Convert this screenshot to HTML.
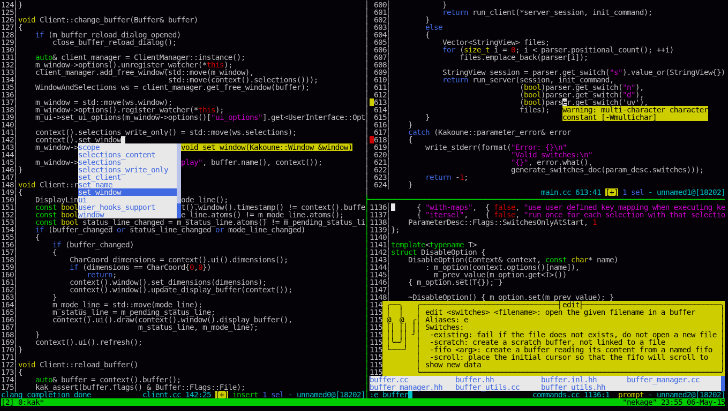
<!DOCTYPE html>
<html><head><meta charset="utf-8"><title>kak</title>
<style>
html,body{margin:0;padding:0;background:#040206;overflow:hidden}
body{width:728px;height:411px;position:relative}
#t{will-change:transform;position:absolute;left:0.63px;top:0.56px;width:1352px;height:756px;transform-origin:0 0;transform:scale(0.5357,0.5355);font-family:"DejaVu Sans Mono","Liberation Mono",monospace;font-size:14.4000px;letter-spacing:-0.6695px;line-height:14px;color:#bebebe}
#t i{position:absolute;height:14px;display:block}
#t b{position:absolute;margin-top:0.4px;font-weight:normal;white-space:pre;height:14px;display:block}
#t b.x{width:8px;margin-left:-1.5px;letter-spacing:0}
#t b.h{text-shadow:0 -0.7px 0 currentColor}
.c0{color:#bebebe}
.c1{color:#a8a8a8}
.c2{color:#4169e1}
.c3{color:#cdcd00}
.c4{color:#cd0000}
.c5{color:#00cd00}
.c6{color:#cd00cd}
.c7{color:#000000}
.c8{color:#bebebe;text-decoration:underline;text-underline-offset:1px}
.c9{color:#e8e8e8}
.c10{color:#00c0c8}
</style></head><body><div id="t">
<i style="left:688px;top:182px;width:8px;height:14px;background:#cdcd00"></i>
<i style="left:1048px;top:182px;width:8px;height:14px;background:#e8e8e8"></i>
<i style="left:1048px;top:196px;width:272px;height:28px;background:#cdcd00"></i>
<i style="left:224px;top:252px;width:8px;height:14px;background:#e8e8e8"></i>
<i style="left:688px;top:252px;width:8px;height:14px;background:#cd0000"></i>
<i style="left:144px;top:266px;width:184px;height:84px;background:#e8e8e8"></i>
<i style="left:328px;top:266px;width:8px;height:112px;background:#bac4ea"></i>
<i style="left:336px;top:266px;width:320px;height:14px;background:#cdcd00"></i>
<i style="left:144px;top:350px;width:184px;height:14px;background:#4169e1"></i>
<i style="left:1128px;top:350px;width:24px;height:14px;background:#cdcd00"></i>
<i style="left:144px;top:364px;width:184px;height:42px;background:#e8e8e8"></i>
<i style="left:328px;top:378px;width:8px;height:28px;background:#4169e1"></i>
<i style="left:728px;top:378px;width:8px;height:14px;background:#e8e8e8"></i>
<i style="left:712px;top:560px;width:640px;height:140px;background:#cdcd00"></i>
<i style="left:688px;top:700px;width:656px;height:28px;background:#e8e8e8"></i>
<i style="left:1344px;top:700px;width:8px;height:28px;background:#4169e1"></i>
<i style="left:400px;top:728px;width:24px;height:14px;background:#cdcd00"></i>
<i style="left:760px;top:728px;width:8px;height:14px;background:#00c0c8"></i>
<i style="left:0px;top:742px;width:1352px;height:14px;background:#00cd00"></i>
<b class="c0" style="left:0px;top:0px">124</b>
<b class="c0 x" style="left:24px;top:0px">│</b>
<b class="c0" style="left:32px;top:0px">}</b>
<b class="c1 x" style="left:680px;top:0px">│</b>
<b class="c0" style="left:696px;top:0px">600</b>
<b class="c0 x" style="left:720px;top:0px">│</b>
<b class="c0" style="left:824px;top:0px">}</b>
<b class="c0" style="left:0px;top:14px">125</b>
<b class="c0 x" style="left:24px;top:14px">│</b>
<b class="c1 x" style="left:680px;top:14px">│</b>
<b class="c0" style="left:696px;top:14px">601</b>
<b class="c0 x" style="left:720px;top:14px">│</b>
<b class="c2" style="left:824px;top:14px">return</b>
<b class="c0" style="left:880px;top:14px">run_client(*server_session, init_command);</b>
<b class="c0" style="left:0px;top:28px">126</b>
<b class="c0 x" style="left:24px;top:28px">│</b>
<b class="c3" style="left:32px;top:28px">void</b>
<b class="c0" style="left:72px;top:28px">Client::change_buffer(Buffer&amp; buffer)</b>
<b class="c1 x" style="left:680px;top:28px">│</b>
<b class="c0" style="left:696px;top:28px">602</b>
<b class="c0 x" style="left:720px;top:28px">│</b>
<b class="c0" style="left:792px;top:28px">}</b>
<b class="c0" style="left:0px;top:42px">127</b>
<b class="c0 x" style="left:24px;top:42px">│</b>
<b class="c0" style="left:32px;top:42px">{</b>
<b class="c1 x" style="left:680px;top:42px">│</b>
<b class="c0" style="left:696px;top:42px">603</b>
<b class="c0 x" style="left:720px;top:42px">│</b>
<b class="c2" style="left:792px;top:42px">else</b>
<b class="c0" style="left:0px;top:56px">128</b>
<b class="c0 x" style="left:24px;top:56px">│</b>
<b class="c2" style="left:64px;top:56px">if</b>
<b class="c0" style="left:88px;top:56px">(m_buffer_reload_dialog_opened)</b>
<b class="c1 x" style="left:680px;top:56px">│</b>
<b class="c0" style="left:696px;top:56px">604</b>
<b class="c0 x" style="left:720px;top:56px">│</b>
<b class="c0" style="left:792px;top:56px">{</b>
<b class="c0" style="left:0px;top:70px">129</b>
<b class="c0 x" style="left:24px;top:70px">│</b>
<b class="c0" style="left:96px;top:70px">close_buffer_reload_dialog();</b>
<b class="c1 x" style="left:680px;top:70px">│</b>
<b class="c0" style="left:696px;top:70px">605</b>
<b class="c0 x" style="left:720px;top:70px">│</b>
<b class="c0" style="left:824px;top:70px">Vector&lt;StringView&gt; files;</b>
<b class="c0" style="left:0px;top:84px">130</b>
<b class="c0 x" style="left:24px;top:84px">│</b>
<b class="c1 x" style="left:680px;top:84px">│</b>
<b class="c0" style="left:696px;top:84px">606</b>
<b class="c0 x" style="left:720px;top:84px">│</b>
<b class="c2" style="left:824px;top:84px">for</b>
<b class="c0" style="left:856px;top:84px">(</b>
<b class="c3" style="left:864px;top:84px">size_t</b>
<b class="c0" style="left:920px;top:84px">i =</b>
<b class="c4" style="left:952px;top:84px">0</b>
<b class="c0" style="left:960px;top:84px">; i &lt; parser.positional_count(); ++i)</b>
<b class="c0" style="left:0px;top:98px">131</b>
<b class="c0 x" style="left:24px;top:98px">│</b>
<b class="c5" style="left:64px;top:98px">auto</b>
<b class="c0" style="left:96px;top:98px">&amp; client_manager = ClientManager::instance();</b>
<b class="c1 x" style="left:680px;top:98px">│</b>
<b class="c0" style="left:696px;top:98px">607</b>
<b class="c0 x" style="left:720px;top:98px">│</b>
<b class="c0" style="left:856px;top:98px">files.emplace_back(parser[i]);</b>
<b class="c0" style="left:0px;top:112px">132</b>
<b class="c0 x" style="left:24px;top:112px">│</b>
<b class="c0" style="left:64px;top:112px">m_window-&gt;options().unregister_watcher(*</b>
<b class="c4" style="left:384px;top:112px">this</b>
<b class="c0" style="left:416px;top:112px">);</b>
<b class="c1 x" style="left:680px;top:112px">│</b>
<b class="c0" style="left:696px;top:112px">608</b>
<b class="c0 x" style="left:720px;top:112px">│</b>
<b class="c0" style="left:0px;top:126px">133</b>
<b class="c0 x" style="left:24px;top:126px">│</b>
<b class="c0" style="left:64px;top:126px">client_manager.add_free_window(std::move(m_window),</b>
<b class="c1 x" style="left:680px;top:126px">│</b>
<b class="c0" style="left:696px;top:126px">609</b>
<b class="c0 x" style="left:720px;top:126px">│</b>
<b class="c0" style="left:824px;top:126px">StringView session = parser.get_switch(</b>
<b class="c6" style="left:1136px;top:126px">&quot;s&quot;</b>
<b class="c0" style="left:1160px;top:126px">).value_or(StringView{})</b>
<b class="c0" style="left:0px;top:140px">134</b>
<b class="c0 x" style="left:24px;top:140px">│</b>
<b class="c0" style="left:312px;top:140px">std::move(context().selections()));</b>
<b class="c1 x" style="left:680px;top:140px">│</b>
<b class="c0" style="left:696px;top:140px">610</b>
<b class="c0 x" style="left:720px;top:140px">│</b>
<b class="c2" style="left:824px;top:140px">return</b>
<b class="c0" style="left:880px;top:140px">run_server(session, init_command,</b>
<b class="c0" style="left:0px;top:154px">135</b>
<b class="c0 x" style="left:24px;top:154px">│</b>
<b class="c0" style="left:64px;top:154px">WindowAndSelections ws = client_manager.get_free_window(buffer);</b>
<b class="c1 x" style="left:680px;top:154px">│</b>
<b class="c0" style="left:696px;top:154px">611</b>
<b class="c0 x" style="left:720px;top:154px">│</b>
<b class="c0" style="left:968px;top:154px">(</b>
<b class="c3" style="left:976px;top:154px">bool</b>
<b class="c0" style="left:1008px;top:154px">)parser.get_switch(</b>
<b class="c6" style="left:1160px;top:154px">&quot;n&quot;</b>
<b class="c0" style="left:1184px;top:154px">),</b>
<b class="c0" style="left:0px;top:168px">136</b>
<b class="c0 x" style="left:24px;top:168px">│</b>
<b class="c1 x" style="left:680px;top:168px">│</b>
<b class="c0" style="left:696px;top:168px">612</b>
<b class="c0 x" style="left:720px;top:168px">│</b>
<b class="c0" style="left:968px;top:168px">(</b>
<b class="c3" style="left:976px;top:168px">bool</b>
<b class="c0" style="left:1008px;top:168px">)parser.get_switch(</b>
<b class="c6" style="left:1160px;top:168px">&quot;d&quot;</b>
<b class="c0" style="left:1184px;top:168px">),</b>
<b class="c0" style="left:0px;top:182px">137</b>
<b class="c0 x" style="left:24px;top:182px">│</b>
<b class="c0" style="left:64px;top:182px">m_window = std::move(ws.window);</b>
<b class="c1 x" style="left:680px;top:182px">│</b>
<b class="c0" style="left:696px;top:182px">613</b>
<b class="c0 x" style="left:720px;top:182px">│</b>
<b class="c0" style="left:968px;top:182px">(</b>
<b class="c3" style="left:976px;top:182px">bool</b>
<b class="c0" style="left:1008px;top:182px">)pars</b>
<b class="c7" style="left:1048px;top:182px">e</b>
<b class="c0" style="left:1056px;top:182px">r.get_switch(&#x27;uv&#x27;),</b>
<b class="c0" style="left:0px;top:196px">138</b>
<b class="c0 x" style="left:24px;top:196px">│</b>
<b class="c0" style="left:64px;top:196px">m_window-&gt;options().register_watcher(*</b>
<b class="c4" style="left:368px;top:196px">this</b>
<b class="c0" style="left:400px;top:196px">);</b>
<b class="c1 x" style="left:680px;top:196px">│</b>
<b class="c0" style="left:696px;top:196px">614</b>
<b class="c0 x" style="left:720px;top:196px">│</b>
<b class="c0" style="left:968px;top:196px">files);</b>
<b class="c7" style="left:1048px;top:196px">warning: multi-character character</b>
<b class="c0" style="left:0px;top:210px">139</b>
<b class="c0 x" style="left:24px;top:210px">│</b>
<b class="c0" style="left:64px;top:210px">m_ui-&gt;set_ui_options(m_window-&gt;options()[</b>
<b class="c6" style="left:392px;top:210px">&quot;ui_options&quot;</b>
<b class="c0" style="left:488px;top:210px">].get&lt;UserInterface::Opt</b>
<b class="c1 x" style="left:680px;top:210px">│</b>
<b class="c0" style="left:696px;top:210px">615</b>
<b class="c0 x" style="left:720px;top:210px">│</b>
<b class="c0" style="left:792px;top:210px">}</b>
<b class="c7" style="left:1048px;top:210px">constant [-Wmultichar]</b>
<b class="c0" style="left:0px;top:224px">140</b>
<b class="c0 x" style="left:24px;top:224px">│</b>
<b class="c1 x" style="left:680px;top:224px">│</b>
<b class="c0" style="left:696px;top:224px">616</b>
<b class="c0 x" style="left:720px;top:224px">│</b>
<b class="c0" style="left:760px;top:224px">}</b>
<b class="c0" style="left:0px;top:238px">141</b>
<b class="c0 x" style="left:24px;top:238px">│</b>
<b class="c0" style="left:64px;top:238px">context().selections_write_only() = std::move(ws.selections);</b>
<b class="c1 x" style="left:680px;top:238px">│</b>
<b class="c0" style="left:696px;top:238px">617</b>
<b class="c0 x" style="left:720px;top:238px">│</b>
<b class="c2" style="left:760px;top:238px">catch</b>
<b class="c0" style="left:808px;top:238px">(Kakoune::parameter_error&amp; error</b>
<b class="c0" style="left:0px;top:252px">142</b>
<b class="c0 x" style="left:24px;top:252px">│</b>
<b class="c0" style="left:64px;top:252px">context().</b>
<b class="c8" style="left:144px;top:252px">set_window</b>
<b class="c1 x" style="left:680px;top:252px">│</b>
<b class="c0" style="left:696px;top:252px">618</b>
<b class="c0 x" style="left:720px;top:252px">│</b>
<b class="c0" style="left:760px;top:252px">{</b>
<b class="c0" style="left:0px;top:266px">143</b>
<b class="c0 x" style="left:24px;top:266px">│</b>
<b class="c0" style="left:64px;top:266px">m_window-&gt;</b>
<b class="c2" style="left:144px;top:266px">scope</b>
<b class="c7" style="left:336px;top:266px">void set_window(Kakoune::Window &amp;window)</b>
<b class="c1 x" style="left:680px;top:266px">│</b>
<b class="c0" style="left:696px;top:266px">619</b>
<b class="c0 x" style="left:720px;top:266px">│</b>
<b class="c0" style="left:792px;top:266px">write_stderr(format(</b>
<b class="c6" style="left:952px;top:266px">&quot;Error: {}\n&quot;</b>
<b class="c0" style="left:0px;top:280px">144</b>
<b class="c0 x" style="left:24px;top:280px">│</b>
<b class="c2" style="left:144px;top:280px">selections_content</b>
<b class="c1 x" style="left:680px;top:280px">│</b>
<b class="c0" style="left:696px;top:280px">620</b>
<b class="c0 x" style="left:720px;top:280px">│</b>
<b class="c6" style="left:952px;top:280px">&quot;Valid switches:\n&quot;</b>
<b class="c0" style="left:0px;top:294px">145</b>
<b class="c0 x" style="left:24px;top:294px">│</b>
<b class="c0" style="left:64px;top:294px">m_window-&gt;</b>
<b class="c2" style="left:144px;top:294px">selections</b>
<b class="c6" style="left:336px;top:294px">play&quot;</b>
<b class="c0" style="left:376px;top:294px">, buffer.name(), context());</b>
<b class="c1 x" style="left:680px;top:294px">│</b>
<b class="c0" style="left:696px;top:294px">621</b>
<b class="c0 x" style="left:720px;top:294px">│</b>
<b class="c6" style="left:952px;top:294px">&quot;{}&quot;</b>
<b class="c0" style="left:984px;top:294px">, error.what(),</b>
<b class="c0" style="left:0px;top:308px">146</b>
<b class="c0 x" style="left:24px;top:308px">│</b>
<b class="c0" style="left:32px;top:308px">}</b>
<b class="c2" style="left:144px;top:308px">selections_write_only</b>
<b class="c1 x" style="left:680px;top:308px">│</b>
<b class="c0" style="left:696px;top:308px">622</b>
<b class="c0 x" style="left:720px;top:308px">│</b>
<b class="c0" style="left:952px;top:308px">generate_switches_doc(param_desc.switches)));</b>
<b class="c0" style="left:0px;top:322px">147</b>
<b class="c0 x" style="left:24px;top:322px">│</b>
<b class="c2" style="left:144px;top:322px">set_client</b>
<b class="c1 x" style="left:680px;top:322px">│</b>
<b class="c0" style="left:696px;top:322px">623</b>
<b class="c0 x" style="left:720px;top:322px">│</b>
<b class="c2" style="left:792px;top:322px">return</b>
<b class="c0" style="left:848px;top:322px">-</b>
<b class="c4" style="left:856px;top:322px">1</b>
<b class="c0" style="left:864px;top:322px">;</b>
<b class="c0" style="left:0px;top:336px">148</b>
<b class="c0 x" style="left:24px;top:336px">│</b>
<b class="c3" style="left:32px;top:336px">void</b>
<b class="c0" style="left:72px;top:336px">Client::r</b>
<b class="c2" style="left:144px;top:336px">set_name</b>
<b class="c1 x" style="left:680px;top:336px">│</b>
<b class="c0" style="left:696px;top:336px">624</b>
<b class="c0 x" style="left:720px;top:336px">│</b>
<b class="c0" style="left:760px;top:336px">}</b>
<b class="c0" style="left:0px;top:350px">149</b>
<b class="c0 x" style="left:24px;top:350px">│</b>
<b class="c0" style="left:32px;top:350px">{</b>
<b class="c9" style="left:144px;top:350px">set_window</b>
<b class="c1 x" style="left:680px;top:350px">│</b>
<b class="c10" style="left:1008px;top:350px">main.cc 613:41</b>
<b class="c7" style="left:1128px;top:350px">[+]</b>
<b class="c2" style="left:1160px;top:350px">1 sel</b>
<b class="c10" style="left:1208px;top:350px">- unnamed1@[18202]</b>
<b class="c0" style="left:0px;top:364px">150</b>
<b class="c0 x h" style="left:24px;top:364px">│</b>
<b class="c0" style="left:64px;top:364px">DisplayLin</b>
<b class="c2" style="left:144px;top:364px">ui</b>
<b class="c0" style="left:336px;top:364px">ode_line();</b>
<b class="c5 x h" style="left:680px;top:364px">├</b>
<b class="c5 x h" style="left:688px;top:364px">─</b>
<b class="c5 x h" style="left:696px;top:364px">─</b>
<b class="c5 x h" style="left:704px;top:364px">─</b>
<b class="c5 x h" style="left:712px;top:364px">─</b>
<b class="c5 x h" style="left:720px;top:364px">─</b>
<b class="c5 x h" style="left:728px;top:364px">─</b>
<b class="c5 x h" style="left:736px;top:364px">─</b>
<b class="c5 x h" style="left:744px;top:364px">─</b>
<b class="c5 x h" style="left:752px;top:364px">─</b>
<b class="c5 x h" style="left:760px;top:364px">─</b>
<b class="c5 x h" style="left:768px;top:364px">─</b>
<b class="c5 x h" style="left:776px;top:364px">─</b>
<b class="c5 x h" style="left:784px;top:364px">─</b>
<b class="c5 x h" style="left:792px;top:364px">─</b>
<b class="c5 x h" style="left:800px;top:364px">─</b>
<b class="c5 x h" style="left:808px;top:364px">─</b>
<b class="c5 x h" style="left:816px;top:364px">─</b>
<b class="c5 x h" style="left:824px;top:364px">─</b>
<b class="c5 x h" style="left:832px;top:364px">─</b>
<b class="c5 x h" style="left:840px;top:364px">─</b>
<b class="c5 x h" style="left:848px;top:364px">─</b>
<b class="c5 x h" style="left:856px;top:364px">─</b>
<b class="c5 x h" style="left:864px;top:364px">─</b>
<b class="c5 x h" style="left:872px;top:364px">─</b>
<b class="c5 x h" style="left:880px;top:364px">─</b>
<b class="c5 x h" style="left:888px;top:364px">─</b>
<b class="c5 x h" style="left:896px;top:364px">─</b>
<b class="c5 x h" style="left:904px;top:364px">─</b>
<b class="c5 x h" style="left:912px;top:364px">─</b>
<b class="c5 x h" style="left:920px;top:364px">─</b>
<b class="c5 x h" style="left:928px;top:364px">─</b>
<b class="c5 x h" style="left:936px;top:364px">─</b>
<b class="c5 x h" style="left:944px;top:364px">─</b>
<b class="c5 x h" style="left:952px;top:364px">─</b>
<b class="c5 x h" style="left:960px;top:364px">─</b>
<b class="c5 x h" style="left:968px;top:364px">─</b>
<b class="c5 x h" style="left:976px;top:364px">─</b>
<b class="c5 x h" style="left:984px;top:364px">─</b>
<b class="c5 x h" style="left:992px;top:364px">─</b>
<b class="c5 x h" style="left:1000px;top:364px">─</b>
<b class="c5 x h" style="left:1008px;top:364px">─</b>
<b class="c5 x h" style="left:1016px;top:364px">─</b>
<b class="c5 x h" style="left:1024px;top:364px">─</b>
<b class="c5 x h" style="left:1032px;top:364px">─</b>
<b class="c5 x h" style="left:1040px;top:364px">─</b>
<b class="c5 x h" style="left:1048px;top:364px">─</b>
<b class="c5 x h" style="left:1056px;top:364px">─</b>
<b class="c5 x h" style="left:1064px;top:364px">─</b>
<b class="c5 x h" style="left:1072px;top:364px">─</b>
<b class="c5 x h" style="left:1080px;top:364px">─</b>
<b class="c5 x h" style="left:1088px;top:364px">─</b>
<b class="c5 x h" style="left:1096px;top:364px">─</b>
<b class="c5 x h" style="left:1104px;top:364px">─</b>
<b class="c5 x h" style="left:1112px;top:364px">─</b>
<b class="c5 x h" style="left:1120px;top:364px">─</b>
<b class="c5 x h" style="left:1128px;top:364px">─</b>
<b class="c5 x h" style="left:1136px;top:364px">─</b>
<b class="c5 x h" style="left:1144px;top:364px">─</b>
<b class="c5 x h" style="left:1152px;top:364px">─</b>
<b class="c5 x h" style="left:1160px;top:364px">─</b>
<b class="c5 x h" style="left:1168px;top:364px">─</b>
<b class="c5 x h" style="left:1176px;top:364px">─</b>
<b class="c5 x h" style="left:1184px;top:364px">─</b>
<b class="c5 x h" style="left:1192px;top:364px">─</b>
<b class="c5 x h" style="left:1200px;top:364px">─</b>
<b class="c5 x h" style="left:1208px;top:364px">─</b>
<b class="c5 x h" style="left:1216px;top:364px">─</b>
<b class="c5 x h" style="left:1224px;top:364px">─</b>
<b class="c5 x h" style="left:1232px;top:364px">─</b>
<b class="c5 x h" style="left:1240px;top:364px">─</b>
<b class="c5 x h" style="left:1248px;top:364px">─</b>
<b class="c5 x h" style="left:1256px;top:364px">─</b>
<b class="c5 x h" style="left:1264px;top:364px">─</b>
<b class="c5 x h" style="left:1272px;top:364px">─</b>
<b class="c5 x h" style="left:1280px;top:364px">─</b>
<b class="c5 x h" style="left:1288px;top:364px">─</b>
<b class="c5 x h" style="left:1296px;top:364px">─</b>
<b class="c5 x h" style="left:1304px;top:364px">─</b>
<b class="c5 x h" style="left:1312px;top:364px">─</b>
<b class="c5 x h" style="left:1320px;top:364px">─</b>
<b class="c5 x h" style="left:1328px;top:364px">─</b>
<b class="c5 x h" style="left:1336px;top:364px">─</b>
<b class="c5 x h" style="left:1344px;top:364px">─</b>
<b class="c0" style="left:0px;top:378px">151</b>
<b class="c0 x" style="left:24px;top:378px">│</b>
<b class="c5" style="left:64px;top:378px">const</b>
<b class="c3" style="left:112px;top:378px">bool</b>
<b class="c2" style="left:144px;top:378px">user_hooks_support</b>
<b class="c0" style="left:336px;top:378px">t().window().timestamp() != context().buffe</b>
<b class="c5 x" style="left:680px;top:378px">│</b>
<b class="c0" style="left:688px;top:378px">1136</b>
<b class="c0 x" style="left:720px;top:378px">│</b>
<b class="c0" style="left:776px;top:378px">{</b>
<b class="c6" style="left:792px;top:378px">&quot;with-maps&quot;</b>
<b class="c0" style="left:880px;top:378px">,</b>
<b class="c0" style="left:904px;top:378px">{</b>
<b class="c4" style="left:920px;top:378px">false</b>
<b class="c0" style="left:960px;top:378px">,</b>
<b class="c6" style="left:976px;top:378px">&quot;use user defined key mapping when executing ke</b>
<b class="c0" style="left:0px;top:392px">152</b>
<b class="c0 x" style="left:24px;top:392px">│</b>
<b class="c5" style="left:64px;top:392px">const</b>
<b class="c3" style="left:112px;top:392px">bool</b>
<b class="c2" style="left:144px;top:392px">window</b>
<b class="c0" style="left:336px;top:392px">e_line.atoms() != m_mode_line.atoms();</b>
<b class="c5 x" style="left:680px;top:392px">│</b>
<b class="c0" style="left:688px;top:392px">1137</b>
<b class="c0 x" style="left:720px;top:392px">│</b>
<b class="c0" style="left:776px;top:392px">{</b>
<b class="c6" style="left:792px;top:392px">&quot;itersel&quot;</b>
<b class="c0" style="left:864px;top:392px">,</b>
<b class="c0" style="left:904px;top:392px">{</b>
<b class="c4" style="left:920px;top:392px">false</b>
<b class="c0" style="left:960px;top:392px">,</b>
<b class="c6" style="left:976px;top:392px">&quot;run once for each selection with that selectio</b>
<b class="c0" style="left:0px;top:406px">153</b>
<b class="c0 x" style="left:24px;top:406px">│</b>
<b class="c5" style="left:64px;top:406px">const</b>
<b class="c3" style="left:112px;top:406px">bool</b>
<b class="c0" style="left:152px;top:406px">status_line_changed = m_status_line.atoms() != m_pending_status_li</b>
<b class="c5 x" style="left:680px;top:406px">│</b>
<b class="c0" style="left:688px;top:406px">1138</b>
<b class="c0 x" style="left:720px;top:406px">│</b>
<b class="c0" style="left:760px;top:406px">ParameterDesc::Flags::SwitchesOnlyAtStart,</b>
<b class="c4" style="left:1104px;top:406px">1</b>
<b class="c0" style="left:0px;top:420px">154</b>
<b class="c0 x" style="left:24px;top:420px">│</b>
<b class="c2" style="left:64px;top:420px">if</b>
<b class="c0" style="left:88px;top:420px">(buffer_changed</b>
<b class="c2" style="left:216px;top:420px">or</b>
<b class="c0" style="left:240px;top:420px">status_line_changed</b>
<b class="c2" style="left:400px;top:420px">or</b>
<b class="c0" style="left:424px;top:420px">mode_line_changed)</b>
<b class="c5 x" style="left:680px;top:420px">│</b>
<b class="c0" style="left:688px;top:420px">1139</b>
<b class="c0 x" style="left:720px;top:420px">│</b>
<b class="c0" style="left:728px;top:420px">};</b>
<b class="c0" style="left:0px;top:434px">155</b>
<b class="c0 x" style="left:24px;top:434px">│</b>
<b class="c0" style="left:64px;top:434px">{</b>
<b class="c5 x" style="left:680px;top:434px">│</b>
<b class="c0" style="left:688px;top:434px">1140</b>
<b class="c0 x" style="left:720px;top:434px">│</b>
<b class="c0" style="left:0px;top:448px">156</b>
<b class="c0 x" style="left:24px;top:448px">│</b>
<b class="c2" style="left:96px;top:448px">if</b>
<b class="c0" style="left:120px;top:448px">(buffer_changed)</b>
<b class="c5 x" style="left:680px;top:448px">│</b>
<b class="c0" style="left:688px;top:448px">1141</b>
<b class="c0 x" style="left:720px;top:448px">│</b>
<b class="c5" style="left:728px;top:448px">template</b>
<b class="c0" style="left:792px;top:448px">&lt;</b>
<b class="c5" style="left:800px;top:448px">typename</b>
<b class="c0" style="left:872px;top:448px">T&gt;</b>
<b class="c0" style="left:0px;top:462px">157</b>
<b class="c0 x" style="left:24px;top:462px">│</b>
<b class="c0" style="left:96px;top:462px">{</b>
<b class="c5 x" style="left:680px;top:462px">│</b>
<b class="c0" style="left:688px;top:462px">1142</b>
<b class="c0 x" style="left:720px;top:462px">│</b>
<b class="c5" style="left:728px;top:462px">struct</b>
<b class="c0" style="left:784px;top:462px">DisableOption {</b>
<b class="c0" style="left:0px;top:476px">158</b>
<b class="c0 x" style="left:24px;top:476px">│</b>
<b class="c0" style="left:128px;top:476px">CharCoord dimensions = context().ui().dimensions();</b>
<b class="c5 x" style="left:680px;top:476px">│</b>
<b class="c0" style="left:688px;top:476px">1143</b>
<b class="c0 x" style="left:720px;top:476px">│</b>
<b class="c0" style="left:760px;top:476px">DisableOption(Context&amp; context,</b>
<b class="c5" style="left:1016px;top:476px">const</b>
<b class="c3" style="left:1064px;top:476px">char</b>
<b class="c0" style="left:1096px;top:476px">* name)</b>
<b class="c0" style="left:0px;top:490px">159</b>
<b class="c0 x" style="left:24px;top:490px">│</b>
<b class="c2" style="left:128px;top:490px">if</b>
<b class="c0" style="left:152px;top:490px">(dimensions == CharCoord{</b>
<b class="c4" style="left:352px;top:490px">0</b>
<b class="c0" style="left:360px;top:490px">,</b>
<b class="c4" style="left:368px;top:490px">0</b>
<b class="c0" style="left:376px;top:490px">})</b>
<b class="c5 x" style="left:680px;top:490px">│</b>
<b class="c0" style="left:688px;top:490px">1144</b>
<b class="c0 x" style="left:720px;top:490px">│</b>
<b class="c0" style="left:792px;top:490px">: m_option(context.options()[name]),</b>
<b class="c0" style="left:0px;top:504px">160</b>
<b class="c0 x" style="left:24px;top:504px">│</b>
<b class="c2" style="left:160px;top:504px">return</b>
<b class="c0" style="left:208px;top:504px">;</b>
<b class="c5 x" style="left:680px;top:504px">│</b>
<b class="c0" style="left:688px;top:504px">1145</b>
<b class="c0 x" style="left:720px;top:504px">│</b>
<b class="c0" style="left:808px;top:504px">m_prev_value(m_option.get&lt;T&gt;())</b>
<b class="c0" style="left:0px;top:518px">161</b>
<b class="c0 x" style="left:24px;top:518px">│</b>
<b class="c0" style="left:128px;top:518px">context().window().set_dimensions(dimensions);</b>
<b class="c5 x" style="left:680px;top:518px">│</b>
<b class="c0" style="left:688px;top:518px">1146</b>
<b class="c0 x" style="left:720px;top:518px">│</b>
<b class="c0" style="left:760px;top:518px">{ m_option.set(T{}); }</b>
<b class="c0" style="left:0px;top:532px">162</b>
<b class="c0 x" style="left:24px;top:532px">│</b>
<b class="c0" style="left:128px;top:532px">context().window().update_display_buffer(context());</b>
<b class="c5 x" style="left:680px;top:532px">│</b>
<b class="c0" style="left:688px;top:532px">1147</b>
<b class="c0 x" style="left:720px;top:532px">│</b>
<b class="c0" style="left:0px;top:546px">163</b>
<b class="c0 x" style="left:24px;top:546px">│</b>
<b class="c0" style="left:96px;top:546px">}</b>
<b class="c5 x" style="left:680px;top:546px">│</b>
<b class="c0" style="left:688px;top:546px">1148</b>
<b class="c0 x" style="left:720px;top:546px">│</b>
<b class="c0" style="left:760px;top:546px">~DisableOption() { m_option.set(m_prev_value); }</b>
<b class="c0" style="left:0px;top:560px">164</b>
<b class="c0 x" style="left:24px;top:560px">│</b>
<b class="c0" style="left:96px;top:560px">m_mode_line = std::move(mode_line);</b>
<b class="c5 x" style="left:680px;top:560px">│</b>
<b class="c0" style="left:688px;top:560px">114</b>
<b class="c7 x" style="left:720px;top:560px">╭</b>
<b class="c7 x" style="left:728px;top:560px">─</b>
<b class="c7 x" style="left:736px;top:560px">─</b>
<b class="c7 x" style="left:744px;top:560px">╮</b>
<b class="c7 x" style="left:776px;top:560px">╭</b>
<b class="c7 x" style="left:784px;top:560px">─</b>
<b class="c7 x" style="left:792px;top:560px">─</b>
<b class="c7 x" style="left:800px;top:560px">─</b>
<b class="c7 x" style="left:808px;top:560px">─</b>
<b class="c7 x" style="left:816px;top:560px">─</b>
<b class="c7 x" style="left:824px;top:560px">─</b>
<b class="c7 x" style="left:832px;top:560px">─</b>
<b class="c7 x" style="left:840px;top:560px">─</b>
<b class="c7 x" style="left:848px;top:560px">─</b>
<b class="c7 x" style="left:856px;top:560px">─</b>
<b class="c7 x" style="left:864px;top:560px">─</b>
<b class="c7 x" style="left:872px;top:560px">─</b>
<b class="c7 x" style="left:880px;top:560px">─</b>
<b class="c7 x" style="left:888px;top:560px">─</b>
<b class="c7 x" style="left:896px;top:560px">─</b>
<b class="c7 x" style="left:904px;top:560px">─</b>
<b class="c7 x" style="left:912px;top:560px">─</b>
<b class="c7 x" style="left:920px;top:560px">─</b>
<b class="c7 x" style="left:928px;top:560px">─</b>
<b class="c7 x" style="left:936px;top:560px">─</b>
<b class="c7 x" style="left:944px;top:560px">─</b>
<b class="c7 x" style="left:952px;top:560px">─</b>
<b class="c7 x" style="left:960px;top:560px">─</b>
<b class="c7 x" style="left:968px;top:560px">─</b>
<b class="c7 x" style="left:976px;top:560px">─</b>
<b class="c7 x" style="left:984px;top:560px">─</b>
<b class="c7 x" style="left:992px;top:560px">─</b>
<b class="c7 x" style="left:1000px;top:560px">─</b>
<b class="c7 x" style="left:1008px;top:560px">─</b>
<b class="c7 x" style="left:1016px;top:560px">─</b>
<b class="c7 x" style="left:1024px;top:560px">─</b>
<b class="c7 x" style="left:1032px;top:560px">─</b>
<b class="c7 x" style="left:1040px;top:560px">┤</b>
<b class="c7" style="left:1048px;top:560px">edit</b>
<b class="c7 x" style="left:1080px;top:560px">├</b>
<b class="c7 x" style="left:1088px;top:560px">─</b>
<b class="c7 x" style="left:1096px;top:560px">─</b>
<b class="c7 x" style="left:1104px;top:560px">─</b>
<b class="c7 x" style="left:1112px;top:560px">─</b>
<b class="c7 x" style="left:1120px;top:560px">─</b>
<b class="c7 x" style="left:1128px;top:560px">─</b>
<b class="c7 x" style="left:1136px;top:560px">─</b>
<b class="c7 x" style="left:1144px;top:560px">─</b>
<b class="c7 x" style="left:1152px;top:560px">─</b>
<b class="c7 x" style="left:1160px;top:560px">─</b>
<b class="c7 x" style="left:1168px;top:560px">─</b>
<b class="c7 x" style="left:1176px;top:560px">─</b>
<b class="c7 x" style="left:1184px;top:560px">─</b>
<b class="c7 x" style="left:1192px;top:560px">─</b>
<b class="c7 x" style="left:1200px;top:560px">─</b>
<b class="c7 x" style="left:1208px;top:560px">─</b>
<b class="c7 x" style="left:1216px;top:560px">─</b>
<b class="c7 x" style="left:1224px;top:560px">─</b>
<b class="c7 x" style="left:1232px;top:560px">─</b>
<b class="c7 x" style="left:1240px;top:560px">─</b>
<b class="c7 x" style="left:1248px;top:560px">─</b>
<b class="c7 x" style="left:1256px;top:560px">─</b>
<b class="c7 x" style="left:1264px;top:560px">─</b>
<b class="c7 x" style="left:1272px;top:560px">─</b>
<b class="c7 x" style="left:1280px;top:560px">─</b>
<b class="c7 x" style="left:1288px;top:560px">─</b>
<b class="c7 x" style="left:1296px;top:560px">─</b>
<b class="c7 x" style="left:1304px;top:560px">─</b>
<b class="c7 x" style="left:1312px;top:560px">─</b>
<b class="c7 x" style="left:1320px;top:560px">─</b>
<b class="c7 x" style="left:1328px;top:560px">─</b>
<b class="c7 x" style="left:1336px;top:560px">─</b>
<b class="c7 x" style="left:1344px;top:560px">╮</b>
<b class="c0" style="left:0px;top:574px">165</b>
<b class="c0 x" style="left:24px;top:574px">│</b>
<b class="c0" style="left:96px;top:574px">m_status_line = m_pending_status_line;</b>
<b class="c5 x" style="left:680px;top:574px">│</b>
<b class="c0" style="left:688px;top:574px">115</b>
<b class="c7 x" style="left:720px;top:574px">│</b>
<b class="c7 x" style="left:744px;top:574px">│</b>
<b class="c7 x" style="left:776px;top:574px">│</b>
<b class="c7" style="left:792px;top:574px">edit &lt;switches&gt; &lt;filename&gt;: open the given filename in a buffer</b>
<b class="c7 x" style="left:1344px;top:574px">│</b>
<b class="c0" style="left:0px;top:588px">166</b>
<b class="c0 x" style="left:24px;top:588px">│</b>
<b class="c0" style="left:96px;top:588px">context().ui().draw(context().window().display_buffer(),</b>
<b class="c5 x" style="left:680px;top:588px">│</b>
<b class="c0" style="left:688px;top:588px">115</b>
<b class="c7" style="left:720px;top:588px">@</b>
<b class="c7" style="left:744px;top:588px">@</b>
<b class="c7 x" style="left:768px;top:588px">╭</b>
<b class="c7 x" style="left:776px;top:588px">│</b>
<b class="c7" style="left:792px;top:588px">Aliases: e</b>
<b class="c7 x" style="left:1344px;top:588px">│</b>
<b class="c0" style="left:0px;top:602px">167</b>
<b class="c0 x" style="left:24px;top:602px">│</b>
<b class="c0" style="left:256px;top:602px">m_status_line, m_mode_line);</b>
<b class="c5 x" style="left:680px;top:602px">│</b>
<b class="c0" style="left:688px;top:602px">115</b>
<b class="c7 x" style="left:720px;top:602px">│</b>
<b class="c7 x" style="left:728px;top:602px">│</b>
<b class="c7 x" style="left:744px;top:602px">│</b>
<b class="c7 x" style="left:752px;top:602px">│</b>
<b class="c7 x" style="left:768px;top:602px">│</b>
<b class="c7 x" style="left:776px;top:602px">│</b>
<b class="c7" style="left:792px;top:602px">Switches:</b>
<b class="c7 x" style="left:1344px;top:602px">│</b>
<b class="c0" style="left:0px;top:616px">168</b>
<b class="c0 x" style="left:24px;top:616px">│</b>
<b class="c0" style="left:64px;top:616px">}</b>
<b class="c5 x" style="left:680px;top:616px">│</b>
<b class="c0" style="left:688px;top:616px">115</b>
<b class="c7 x" style="left:720px;top:616px">│</b>
<b class="c7 x" style="left:728px;top:616px">│</b>
<b class="c7 x" style="left:744px;top:616px">│</b>
<b class="c7 x" style="left:752px;top:616px">│</b>
<b class="c7 x" style="left:768px;top:616px">╯</b>
<b class="c7 x" style="left:776px;top:616px">│</b>
<b class="c7" style="left:800px;top:616px">-existing: fail if the file does not exists, do not open a new file</b>
<b class="c7 x" style="left:1344px;top:616px">│</b>
<b class="c0" style="left:0px;top:630px">169</b>
<b class="c0 x" style="left:24px;top:630px">│</b>
<b class="c0" style="left:64px;top:630px">context().ui().refresh();</b>
<b class="c5 x" style="left:680px;top:630px">│</b>
<b class="c0" style="left:688px;top:630px">115</b>
<b class="c7 x" style="left:720px;top:630px">│</b>
<b class="c7 x" style="left:728px;top:630px">╰</b>
<b class="c7 x" style="left:736px;top:630px">─</b>
<b class="c7 x" style="left:744px;top:630px">╯</b>
<b class="c7 x" style="left:752px;top:630px">│</b>
<b class="c7 x" style="left:776px;top:630px">│</b>
<b class="c7" style="left:800px;top:630px">-scratch: create a scratch buffer, not linked to a file</b>
<b class="c7 x" style="left:1344px;top:630px">│</b>
<b class="c0" style="left:0px;top:644px">170</b>
<b class="c0 x" style="left:24px;top:644px">│</b>
<b class="c0" style="left:32px;top:644px">}</b>
<b class="c5 x" style="left:680px;top:644px">│</b>
<b class="c0" style="left:688px;top:644px">115</b>
<b class="c7 x" style="left:720px;top:644px">╰</b>
<b class="c7 x" style="left:728px;top:644px">─</b>
<b class="c7 x" style="left:736px;top:644px">─</b>
<b class="c7 x" style="left:744px;top:644px">─</b>
<b class="c7 x" style="left:752px;top:644px">╯</b>
<b class="c7 x" style="left:776px;top:644px">│</b>
<b class="c7" style="left:800px;top:644px">-fifo &lt;arg&gt;: create a buffer reading its content from a named fifo</b>
<b class="c7 x" style="left:1344px;top:644px">│</b>
<b class="c0" style="left:0px;top:658px">171</b>
<b class="c0 x" style="left:24px;top:658px">│</b>
<b class="c5 x" style="left:680px;top:658px">│</b>
<b class="c0" style="left:688px;top:658px">115</b>
<b class="c7 x" style="left:776px;top:658px">│</b>
<b class="c7" style="left:800px;top:658px">-scroll: place the initial cursor so that the fifo will scroll to</b>
<b class="c7 x" style="left:1344px;top:658px">│</b>
<b class="c0" style="left:0px;top:672px">172</b>
<b class="c0 x" style="left:24px;top:672px">│</b>
<b class="c3" style="left:32px;top:672px">void</b>
<b class="c0" style="left:72px;top:672px">Client::reload_buffer()</b>
<b class="c5 x" style="left:680px;top:672px">│</b>
<b class="c0" style="left:688px;top:672px">115</b>
<b class="c7 x" style="left:776px;top:672px">│</b>
<b class="c7" style="left:792px;top:672px">show new data</b>
<b class="c7 x" style="left:1344px;top:672px">│</b>
<b class="c0" style="left:0px;top:686px">173</b>
<b class="c0 x" style="left:24px;top:686px">│</b>
<b class="c0" style="left:32px;top:686px">{</b>
<b class="c5 x" style="left:680px;top:686px">│</b>
<b class="c0" style="left:688px;top:686px">115</b>
<b class="c7 x" style="left:776px;top:686px">╰</b>
<b class="c7 x" style="left:784px;top:686px">─</b>
<b class="c7 x" style="left:792px;top:686px">─</b>
<b class="c7 x" style="left:800px;top:686px">─</b>
<b class="c7 x" style="left:808px;top:686px">─</b>
<b class="c7 x" style="left:816px;top:686px">─</b>
<b class="c7 x" style="left:824px;top:686px">─</b>
<b class="c7 x" style="left:832px;top:686px">─</b>
<b class="c7 x" style="left:840px;top:686px">─</b>
<b class="c7 x" style="left:848px;top:686px">─</b>
<b class="c7 x" style="left:856px;top:686px">─</b>
<b class="c7 x" style="left:864px;top:686px">─</b>
<b class="c7 x" style="left:872px;top:686px">─</b>
<b class="c7 x" style="left:880px;top:686px">─</b>
<b class="c7 x" style="left:888px;top:686px">─</b>
<b class="c7 x" style="left:896px;top:686px">─</b>
<b class="c7 x" style="left:904px;top:686px">─</b>
<b class="c7 x" style="left:912px;top:686px">─</b>
<b class="c7 x" style="left:920px;top:686px">─</b>
<b class="c7 x" style="left:928px;top:686px">─</b>
<b class="c7 x" style="left:936px;top:686px">─</b>
<b class="c7 x" style="left:944px;top:686px">─</b>
<b class="c7 x" style="left:952px;top:686px">─</b>
<b class="c7 x" style="left:960px;top:686px">─</b>
<b class="c7 x" style="left:968px;top:686px">─</b>
<b class="c7 x" style="left:976px;top:686px">─</b>
<b class="c7 x" style="left:984px;top:686px">─</b>
<b class="c7 x" style="left:992px;top:686px">─</b>
<b class="c7 x" style="left:1000px;top:686px">─</b>
<b class="c7 x" style="left:1008px;top:686px">─</b>
<b class="c7 x" style="left:1016px;top:686px">─</b>
<b class="c7 x" style="left:1024px;top:686px">─</b>
<b class="c7 x" style="left:1032px;top:686px">─</b>
<b class="c7 x" style="left:1040px;top:686px">─</b>
<b class="c7 x" style="left:1048px;top:686px">─</b>
<b class="c7 x" style="left:1056px;top:686px">─</b>
<b class="c7 x" style="left:1064px;top:686px">─</b>
<b class="c7 x" style="left:1072px;top:686px">─</b>
<b class="c7 x" style="left:1080px;top:686px">─</b>
<b class="c7 x" style="left:1088px;top:686px">─</b>
<b class="c7 x" style="left:1096px;top:686px">─</b>
<b class="c7 x" style="left:1104px;top:686px">─</b>
<b class="c7 x" style="left:1112px;top:686px">─</b>
<b class="c7 x" style="left:1120px;top:686px">─</b>
<b class="c7 x" style="left:1128px;top:686px">─</b>
<b class="c7 x" style="left:1136px;top:686px">─</b>
<b class="c7 x" style="left:1144px;top:686px">─</b>
<b class="c7 x" style="left:1152px;top:686px">─</b>
<b class="c7 x" style="left:1160px;top:686px">─</b>
<b class="c7 x" style="left:1168px;top:686px">─</b>
<b class="c7 x" style="left:1176px;top:686px">─</b>
<b class="c7 x" style="left:1184px;top:686px">─</b>
<b class="c7 x" style="left:1192px;top:686px">─</b>
<b class="c7 x" style="left:1200px;top:686px">─</b>
<b class="c7 x" style="left:1208px;top:686px">─</b>
<b class="c7 x" style="left:1216px;top:686px">─</b>
<b class="c7 x" style="left:1224px;top:686px">─</b>
<b class="c7 x" style="left:1232px;top:686px">─</b>
<b class="c7 x" style="left:1240px;top:686px">─</b>
<b class="c7 x" style="left:1248px;top:686px">─</b>
<b class="c7 x" style="left:1256px;top:686px">─</b>
<b class="c7 x" style="left:1264px;top:686px">─</b>
<b class="c7 x" style="left:1272px;top:686px">─</b>
<b class="c7 x" style="left:1280px;top:686px">─</b>
<b class="c7 x" style="left:1288px;top:686px">─</b>
<b class="c7 x" style="left:1296px;top:686px">─</b>
<b class="c7 x" style="left:1304px;top:686px">─</b>
<b class="c7 x" style="left:1312px;top:686px">─</b>
<b class="c7 x" style="left:1320px;top:686px">─</b>
<b class="c7 x" style="left:1328px;top:686px">─</b>
<b class="c7 x" style="left:1336px;top:686px">─</b>
<b class="c7 x" style="left:1344px;top:686px">╯</b>
<b class="c0" style="left:0px;top:700px">174</b>
<b class="c0 x" style="left:24px;top:700px">│</b>
<b class="c5" style="left:64px;top:700px">auto</b>
<b class="c0" style="left:96px;top:700px">&amp; buffer = context().buffer();</b>
<b class="c5 x" style="left:680px;top:700px">│</b>
<b class="c2" style="left:688px;top:700px">buffer.cc</b>
<b class="c2" style="left:848px;top:700px">buffer.hh</b>
<b class="c2" style="left:1008px;top:700px">buffer.inl.hh</b>
<b class="c2" style="left:1168px;top:700px">buffer_manager.cc</b>
<b class="c0" style="left:0px;top:714px">175</b>
<b class="c0 x" style="left:24px;top:714px">│</b>
<b class="c0" style="left:64px;top:714px">kak_assert(buffer.flags() &amp; Buffer::Flags::File);</b>
<b class="c5 x" style="left:680px;top:714px">│</b>
<b class="c2" style="left:688px;top:714px">buffer_manager.hh</b>
<b class="c2" style="left:848px;top:714px">buffer_utils.cc</b>
<b class="c2" style="left:1008px;top:714px">buffer_utils.hh</b>
<b class="c10" style="left:0px;top:728px">clang completion done</b>
<b class="c10" style="left:264px;top:728px">client.cc 142:25</b>
<b class="c7" style="left:400px;top:728px">[+]</b>
<b class="c5" style="left:432px;top:728px">insert</b>
<b class="c2" style="left:488px;top:728px">1 sel</b>
<b class="c10" style="left:536px;top:728px">- unnamed0@[18202]</b>
<b class="c5 x" style="left:680px;top:728px">│</b>
<b class="c10" style="left:688px;top:728px">:e buffer</b>
<b class="c10" style="left:992px;top:728px">commands.cc 1136:1</b>
<b class="c3" style="left:1152px;top:728px">prompt</b>
<b class="c10" style="left:1208px;top:728px">- unnamed2@[18202]</b>
<b class="c7" style="left:0px;top:742px">[2] 0:kak*</b>
<b class="c7" style="left:1160px;top:742px">&quot;nekage&quot; 23:55 06-May-15</b>
</div></body></html>
